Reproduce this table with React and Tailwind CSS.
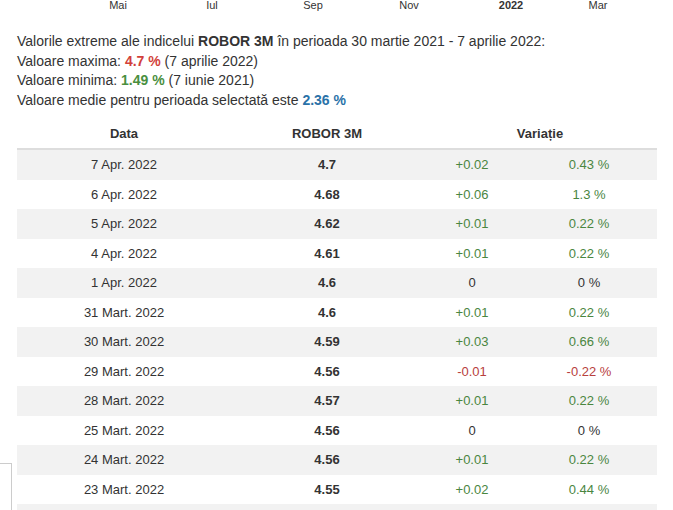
import React from "react";

const rows = [
  ["7 Apr. 2022", "4.7", "+0.02", "0.43 %"],
  ["6 Apr. 2022", "4.68", "+0.06", "1.3 %"],
  ["5 Apr. 2022", "4.62", "+0.01", "0.22 %"],
  ["4 Apr. 2022", "4.61", "+0.01", "0.22 %"],
  ["1 Apr. 2022", "4.6", "0", "0 %"],
  ["31 Mart. 2022", "4.6", "+0.01", "0.22 %"],
  ["30 Mart. 2022", "4.59", "+0.03", "0.66 %"],
  ["29 Mart. 2022", "4.56", "-0.01", "-0.22 %"],
  ["28 Mart. 2022", "4.57", "+0.01", "0.22 %"],
  ["25 Mart. 2022", "4.56", "0", "0 %"],
  ["24 Mart. 2022", "4.56", "+0.01", "0.22 %"],
  ["23 Mart. 2022", "4.55", "+0.02", "0.44 %"],
];

const axis = [
  ["Mai", 118, false],
  ["Iul", 212, false],
  ["Sep", 313, false],
  ["Nov", 409, false],
  ["2022", 511, true],
  ["Mar", 598, false],
];

function colorFor(v) {
  if (v.startsWith("+")) return "text-[#4a863f]";
  if (v.startsWith("-")) return "text-[#b8403d]";
  return "text-[#333333]";
}

export default function App() {
  return (
    <div
      className="relative w-[673px] h-[510px] overflow-hidden bg-white text-[#333333]"
      style={{ fontFamily: '"Liberation Sans", Arial, sans-serif' }}
    >
      <div className="relative h-[12px]">
        {axis.map(([t, x, b]) => (
          <span
            key={t}
            className={`absolute top-[-1px] -translate-x-1/2 text-[11px] leading-[13px] ${b ? "font-bold" : ""}`}
            style={{ left: x }}
          >
            {t}
          </span>
        ))}
      </div>

      <div className="mt-[20px] pl-[17px] text-[14px] leading-[19.6px]">
        <div>
          Valorile extreme ale indicelui <b>ROBOR 3M</b> în perioada 30 martie 2021 - 7 aprilie 2022:
        </div>
        <div>
          Valoare maxima: <b className="text-[#d23f3a]">4.7 %</b> (7 aprilie 2022)
        </div>
        <div>
          Valoare minima: <b className="text-[#4a8f3f]">1.49 %</b> (7 iunie 2021)
        </div>
        <div>
          Valoare medie pentru perioada selectată este <b className="text-[#2b72a8]">2.36 %</b>
        </div>
      </div>

      <div className="ml-[17px] mt-[8px] w-[640px] text-[13px]">
        <div className="flex h-[32px] items-center border-b-2 border-[#dddddd] font-bold">
          <div className="w-[214px] text-center">Data</div>
          <div className="w-[192px] text-center">ROBOR 3M</div>
          <div className="w-[234px] text-center">Variație</div>
        </div>
        {rows.map((r, i) => (
          <div
            key={i}
            className={`flex h-[29.5px] items-center ${i % 2 === 0 ? "bg-[#f2f2f2]" : "bg-white"}`}
          >
            <div className="w-[214px] text-center">{r[0]}</div>
            <div className="w-[192px] text-center font-bold">{r[1]}</div>
            <div className={`w-[98px] text-center ${colorFor(r[2])}`}>{r[2]}</div>
            <div className={`w-[136px] text-center ${colorFor(r[3] === "0 %" ? "0" : r[3].startsWith("-") ? "-" : "+")}`}>
              {r[3]}
            </div>
          </div>
        ))}
        <div className="h-[29.5px] bg-[#f2f2f2]" />
      </div>

      <div className="absolute left-0 top-[463px] h-[60px] w-[12px] border-t border-r border-[#cccccc]" />
    </div>
  );
}
